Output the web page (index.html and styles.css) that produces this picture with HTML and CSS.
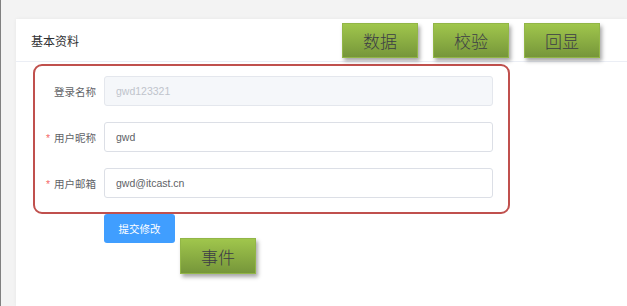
FILE: index.html
```html
<!DOCTYPE html>
<html lang="zh-CN">
<head>
    <meta charset="UTF-8">
    <meta name="viewport" content="width=device-width, initial-scale=1.0">
    <title>基本资料</title>
    <link rel="stylesheet" href="styles.css">
</head>
<body>
    <div class="page">
        <div class="card">
            <div class="card-header">
                <span class="card-title">基本资料</span>
                <div class="tags">
                    <span class="tag">数据</span>
                    <span class="tag">校验</span>
                    <span class="tag">回显</span>
                </div>
            </div>
            <div class="card-body">
                <form class="profile-form">
                    <div class="form-item">
                        <label class="form-label">登录名称</label>
                        <input class="form-input" type="text" value="gwd123321" disabled>
                    </div>
                    <div class="form-item">
                        <label class="form-label"><span class="required">*</span>用户昵称</label>
                        <input class="form-input" type="text" value="gwd">
                    </div>
                    <div class="form-item">
                        <label class="form-label"><span class="required">*</span>用户邮箱</label>
                        <input class="form-input" type="text" value="gwd@itcast.cn">
                    </div>
                </form>
                <div class="actions">
                    <button type="button" class="submit-btn">提交修改</button>
                    <span class="tag tag-event">事件</span>
                </div>
            </div>
        </div>
    </div>
</body>
</html>
```

FILE: styles.css
```css
html, body {
    height: 100%;
}
body {
    margin: 0;
    font-family: "Liberation Sans", "Noto Sans CJK SC", sans-serif;
    background-color: #f3f3f3;
    border-left: 1px solid #808080;
    overflow: hidden;
}
.page {
    padding: 19px 0 0 15px;
    height: 100%;
    box-sizing: border-box;
}
.card {
    background-color: #fff;
    height: 100%;
    box-shadow: 0 0 4px rgba(0, 0, 0, 0.05);
}
.card-header {
    display: flex;
    align-items: center;
    height: 42px;
    padding: 0 27px 0 15px;
    border-bottom: 1px solid #ebeef5;
}
.card-title {
    font-size: 12px;
    color: #303133;
}
.tags {
    margin-left: auto;
    display: flex;
    gap: 15px;
}
.tag {
    display: flex;
    align-items: center;
    justify-content: center;
    width: 76px;
    height: 35px;
    box-sizing: border-box;
    background: linear-gradient(#a0c64c, #76963a);
    border: 1px solid #92b647;
    box-shadow: 2px 3px 4px rgba(0, 0, 0, 0.35);
    color: #3c3c46;
    font-family: "Noto Sans CJK SC", sans-serif;
    font-weight: 300;
    font-size: 17px;
}
.card-body {
    padding: 2px 0 0 17px;
}
.profile-form {
    width: 477px;
    box-sizing: border-box;
    border: 2px solid #c0504d;
    border-radius: 9px;
    padding: 10px 15px 14px 0;
    margin: 0;
}
.form-item {
    display: flex;
    align-items: center;
    height: 30px;
    margin-bottom: 16px;
}
.form-item:last-child {
    margin-bottom: 0;
}
.form-label {
    width: 61px;
    padding-right: 8px;
    text-align: right;
    font-size: 10.5px;
    color: #606266;
}
.required {
    color: #f56c6c;
    margin-right: 4px;
}
.form-input {
    flex: 1;
    height: 30px;
    box-sizing: border-box;
    border: 1px solid #dcdfe6;
    border-radius: 3px;
    padding: 0 11px;
    font-family: "Liberation Sans", sans-serif;
    font-size: 10.5px;
    color: #606266;
    background-color: #fff;
    outline: none;
}
.form-input:disabled {
    background-color: #f5f7fa;
    border-color: #e4e7ed;
    color: #c0c4cc;
}
.actions {
    display: flex;
    align-items: flex-start;
    padding-left: 71px;
}
.submit-btn {
    width: 71px;
    height: 29px;
    border: none;
    border-radius: 3px;
    background-color: #409eff;
    color: #fff;
    font-family: "Noto Sans CJK SC", sans-serif;
    font-size: 10.5px;
    cursor: pointer;
}
.tag-event {
    margin: 24px 0 0 5px;
    height: 36px;
}
```
